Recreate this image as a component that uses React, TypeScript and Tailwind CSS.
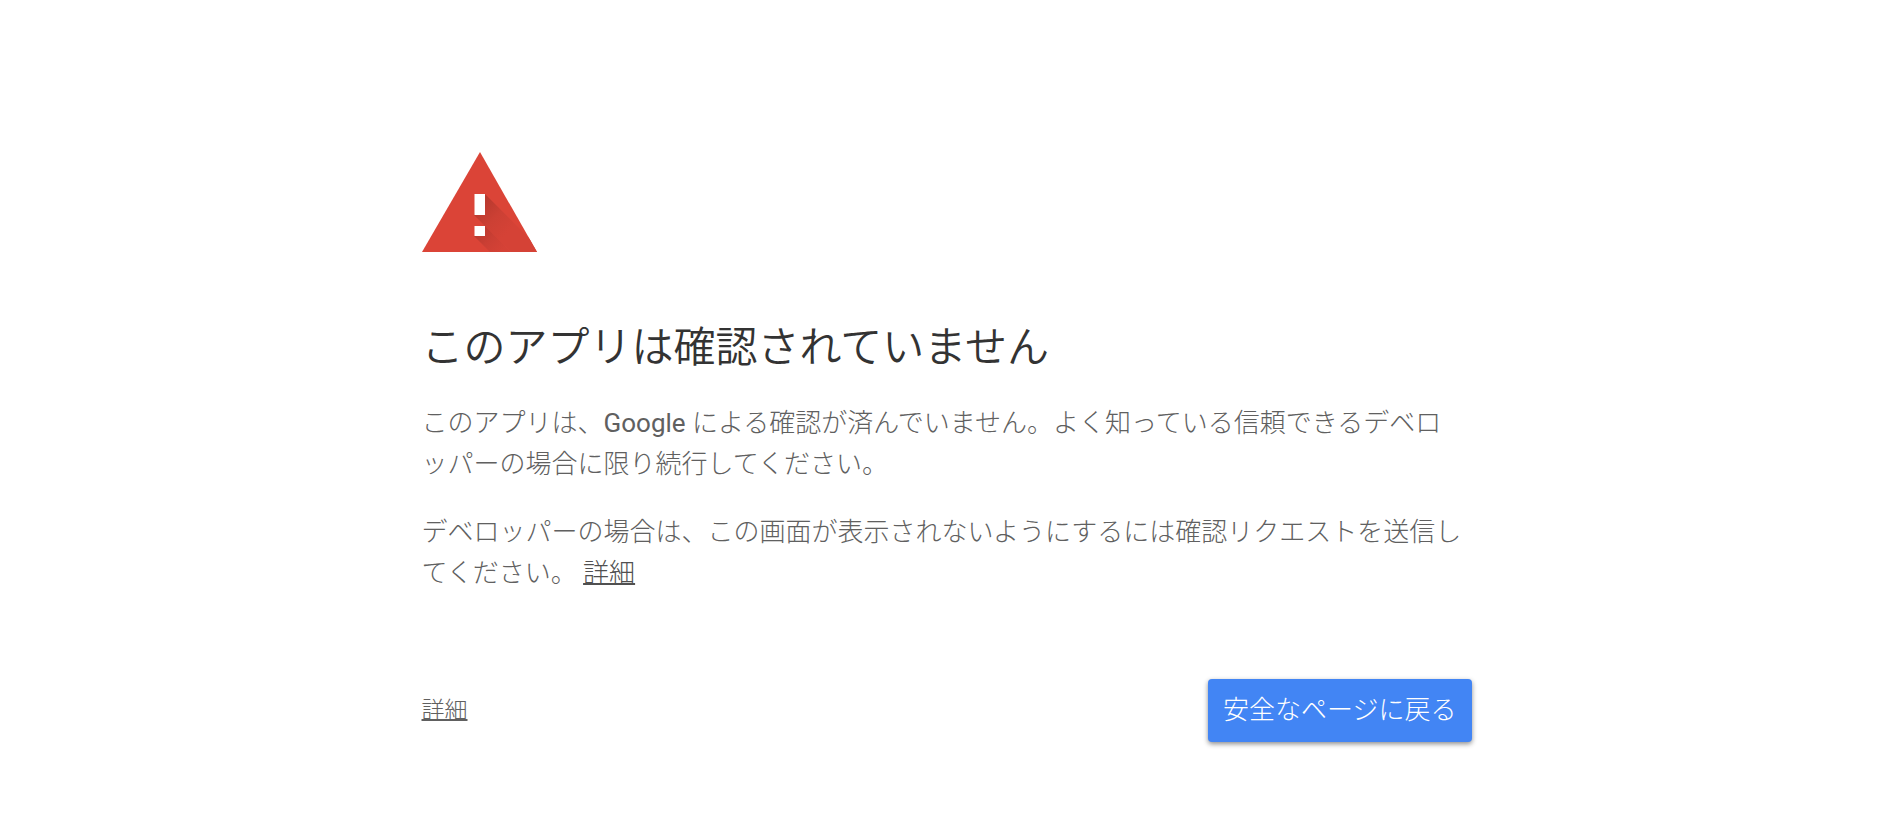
function WarningIcon() {
  return (
    <svg className="block h-[100px] w-[116px]" viewBox="0 0 116 100" role="img" aria-label="警告">
      <defs>
        <linearGradient id="shade-bar" gradientUnits="userSpaceOnUse" x1="56" y1="54" x2="84" y2="82">
          <stop offset="0" stopColor="#b8392e" />
          <stop offset="0.5" stopColor="#cc4034" />
          <stop offset="1" stopColor="#d54236" />
        </linearGradient>
        <linearGradient id="shade-dot" gradientUnits="userSpaceOnUse" x1="56" y1="78" x2="78" y2="100">
          <stop offset="0" stopColor="#b8392e" />
          <stop offset="0.5" stopColor="#cb3f34" />
          <stop offset="1" stopColor="#d54236" />
        </linearGradient>
        <clipPath id="triangle">
          <path d="M58 0 115 100H0Z" />
        </clipPath>
      </defs>
      <path d="M58 0 115 100H0Z" fill="#db4437" />
      <g clipPath="url(#triangle)">
        <path d="M63 42 121 100H89L52 63Z" fill="url(#shade-bar)" />
        <path d="M63 74 89 100H68L52 84Z" fill="url(#shade-dot)" />
      </g>
      <path d="M52.5 42H63v21H52.5zM52.5 74H63v10H52.5z" fill="#fff" />
    </svg>
  );
}

export default function App() {
  return (
    <div
      lang="ja"
      className="min-h-screen bg-white px-6 pt-[152px] pb-20 font-['Roboto','Noto_Sans_CJK_JP',sans-serif] text-[26px] leading-[41px] font-light text-[#606060]"
    >
      <main className="mx-auto max-w-[1050px]">
        <WarningIcon />
        <h1 className="mt-[68px] text-[42px] leading-[56px] font-[350] text-[#333]">このアプリは確認されていません</h1>
        <p className="mt-[27px]">
          このアプリは、<span className="font-normal">Google</span> による確認が済んでいません。よく知っている信頼できるデベロ
          <br />
          ッパーの場合に限り続行してください。
        </p>
        <p className="mt-[27px]">
          デベロッパーの場合は、この画面が表示されないようにするには確認リクエストを送信し
          <br />
          てください。{' '}
          <a href="#verification" className="text-[#505050] underline decoration-2">
            詳細
          </a>
        </p>
        <div className="mt-[85px] flex items-center justify-between">
          <a href="#details" className="text-[23px] leading-8 underline decoration-2">
            詳細
          </a>
          <button
            type="button"
            className="h-[63px] cursor-pointer rounded-[4px] bg-[#4285f4] px-[15px] text-white shadow-[0_2px_5px_rgba(0,0,0,0.45)]"
          >
            安全なページに戻る
          </button>
        </div>
      </main>
    </div>
  );
}
